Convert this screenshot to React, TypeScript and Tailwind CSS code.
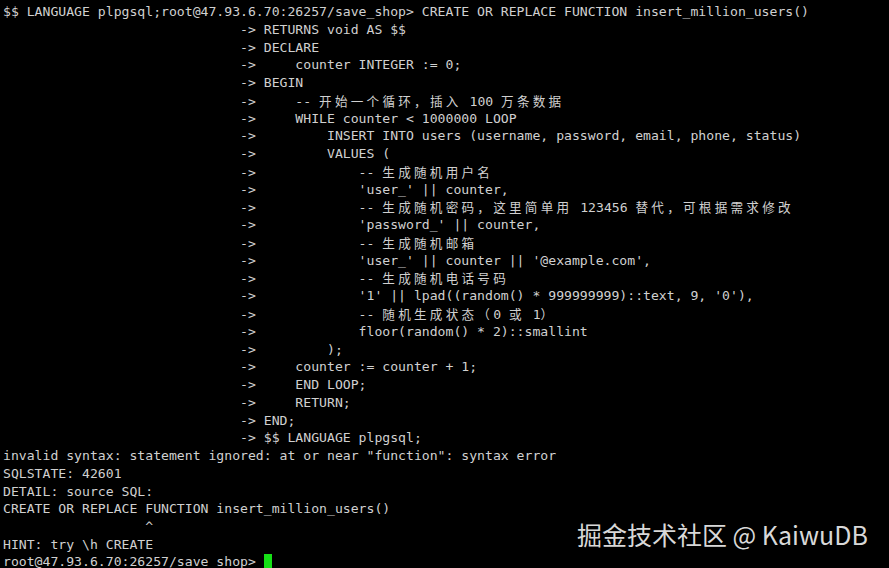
const PAD = "                              -> ";

const lines: string[] = [
  "$$ LANGUAGE plpgsql;root@47.93.6.70:26257/save_shop> CREATE OR REPLACE FUNCTION insert_million_users()",
  PAD + "RETURNS void AS $$",
  PAD + "DECLARE",
  PAD + "    counter INTEGER := 0;",
  PAD + "BEGIN",
  PAD + "    -- 开始一个循环，插入 100 万条数据",
  PAD + "    WHILE counter < 1000000 LOOP",
  PAD + "        INSERT INTO users (username, password, email, phone, status)",
  PAD + "        VALUES (",
  PAD + "            -- 生成随机用户名",
  PAD + "            'user_' || counter,",
  PAD + "            -- 生成随机密码，这里简单用 123456 替代，可根据需求修改",
  PAD + "            'password_' || counter,",
  PAD + "            -- 生成随机邮箱",
  PAD + "            'user_' || counter || '@example.com',",
  PAD + "            -- 生成随机电话号码",
  PAD + "            '1' || lpad((random() * 999999999)::text, 9, '0'),",
  PAD + "            -- 随机生成状态（0 或 1）",
  PAD + "            floor(random() * 2)::smallint",
  PAD + "        );",
  PAD + "    counter := counter + 1;",
  PAD + "    END LOOP;",
  PAD + "    RETURN;",
  PAD + "END;",
  PAD + "$$ LANGUAGE plpgsql;",
  'invalid syntax: statement ignored: at or near "function": syntax error',
  "SQLSTATE: 42601",
  "DETAIL: source SQL:",
  "CREATE OR REPLACE FUNCTION insert_million_users()",
  "                  ^",
  "HINT: try \\h CREATE",
];

// split a line into ascii runs and wide (CJK / fullwidth) runs
function runs(line: string) {
  const out: { wide: boolean; text: string }[] = [];
  for (const ch of line) {
    const wide = ch.charCodeAt(0) > 0x2e80;
    const last = out[out.length - 1];
    if (last && last.wide === wide) last.text += ch;
    else out.push({ wide, text: ch });
  }
  return out;
}

function Line({ text }: { text: string }) {
  return (
    <div className="h-[17.77px] leading-[17.77px] whitespace-pre">
      {runs(text).map((r, i) =>
        r.wide ? (
          <span key={i} className="font-['Noto_Sans_CJK_SC',sans-serif] text-[12.6px] tracking-[3.24px]">
            {r.text}
          </span>
        ) : (
          <span key={i}>{r.text}</span>
        )
      )}
    </div>
  );
}

export default function App() {
  return (
    <div className="relative w-[889px] h-[568px] overflow-hidden bg-black text-[#d0d0d0] font-['DejaVu_Sans_Mono',monospace] text-[13.14px] pl-[3px] pt-[3px]">
      {lines.map((l, i) => (
        <Line key={i} text={l} />
      ))}
      <div className="flex h-[17.77px] leading-[16px] whitespace-pre">
        <span>root@47.93.6.70:26257/save_shop&gt; </span>
        <span className="w-[8px] h-[16px] bg-[#16e016]" />
      </div>

      {/* watermark */}
      <div className="absolute left-[577px] top-[517px] text-[25px] leading-[34px] text-[#d8d8d8] font-['Noto_Sans_CJK_SC',sans-serif] whitespace-nowrap">
        掘金技术社区 @ KaiwuDB
      </div>
    </div>
  );
}
